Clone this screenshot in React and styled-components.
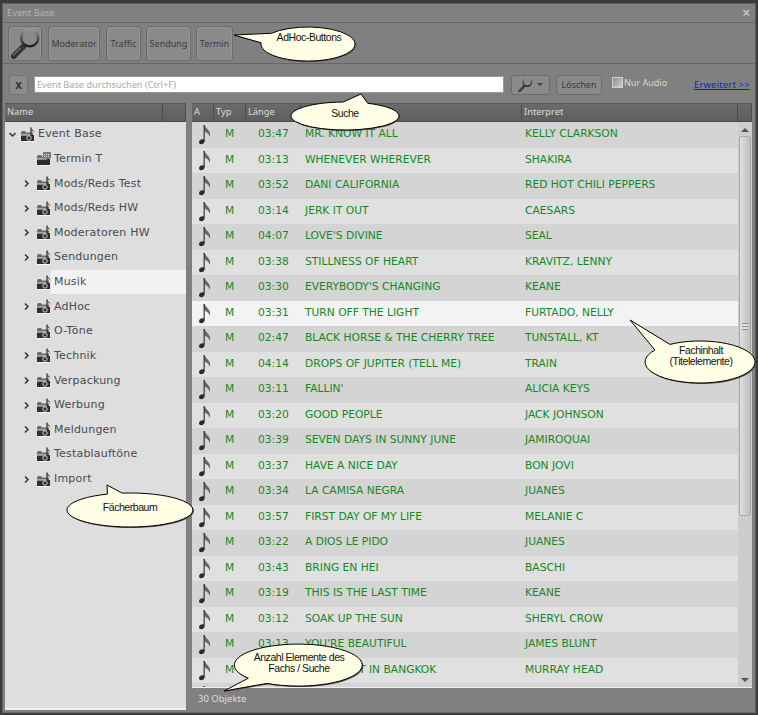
import React from "react";
import styled, { createGlobalStyle } from "styled-components";

const GlobalStyle = createGlobalStyle`
  html, body {
    margin: 0;
    padding: 0;
    background: #3c3c3c;
  }
`;

const CHROME_FONT = `"Noto Sans", sans-serif`;
const COLUMNS = "22px 32px 55px 221px 216px 1fr";

const tracks = [
  ["03:47", "MR. KNOW IT ALL", "KELLY CLARKSON"],
  ["03:13", "WHENEVER WHEREVER", "SHAKIRA"],
  ["03:52", "DANI CALIFORNIA", "RED HOT CHILI PEPPERS"],
  ["03:14", "JERK IT OUT", "CAESARS"],
  ["04:07", "LOVE'S DIVINE", "SEAL"],
  ["03:38", "STILLNESS OF HEART", "KRAVITZ, LENNY"],
  ["03:30", "EVERYBODY'S CHANGING", "KEANE"],
  ["03:31", "TURN OFF THE LIGHT", "FURTADO, NELLY"],
  ["02:47", "BLACK HORSE & THE CHERRY TREE", "TUNSTALL, KT"],
  ["04:14", "DROPS OF JUPITER (TELL ME)", "TRAIN"],
  ["03:11", "FALLIN'", "ALICIA KEYS"],
  ["03:20", "GOOD PEOPLE", "JACK JOHNSON"],
  ["03:39", "SEVEN DAYS IN SUNNY JUNE", "JAMIROQUAI"],
  ["03:37", "HAVE A NICE DAY", "BON JOVI"],
  ["03:34", "LA CAMISA NEGRA", "JUANES"],
  ["03:57", "FIRST DAY OF MY LIFE", "MELANIE C"],
  ["03:22", "A DIOS LE PIDO", "JUANES"],
  ["03:43", "BRING EN HEI", "BASCHI"],
  ["03:19", "THIS IS THE LAST TIME", "KEANE"],
  ["03:12", "SOAK UP THE SUN", "SHERYL CROW"],
  ["03:13", "YOU'RE BEAUTIFUL", "JAMES BLUNT"],
  ["03:46", "ONE NIGHT IN BANGKOK", "MURRAY HEAD"],
  ["", "", ""],
];

const treeItems = [
  { label: "Termin T", calendar: true },
  { label: "Mods/Reds Test", arrow: true },
  { label: "Mods/Reds HW", arrow: true },
  { label: "Moderatoren HW", arrow: true },
  { label: "Sendungen", arrow: true },
  { label: "Musik", selected: true },
  { label: "AdHoc", arrow: true },
  { label: "O-Töne" },
  { label: "Technik", arrow: true },
  { label: "Verpackung", arrow: true },
  { label: "Werbung", arrow: true },
  { label: "Meldungen", arrow: true },
  { label: "Testablauftöne" },
  { label: "Import", arrow: true },
];

const Window = styled.div`
  position: relative;
  width: 758px;
  height: 715px;
  box-sizing: border-box;
  padding: 3px 2px 2px;
  background: #3c3c3c;
  overflow: hidden;
  font-family: "DejaVu Sans", sans-serif;
`;

const Frame = styled.div`
  height: 100%;
  box-sizing: border-box;
  padding: 0 3px 2px 2px;
  display: flex;
  flex-direction: column;
  background: #808080;
  border: 1px solid #5f5f5f;
  border-bottom-color: #6a6a6a;
`;

const TitleBar = styled.div`
  flex: 0 0 18px;
  box-sizing: border-box;
  display: flex;
  align-items: center;
  justify-content: space-between;
  padding: 0 0 2px 2px;
  font-family: ${CHROME_FONT};
  font-size: 9.3px;
  color: #b4b4b4;
`;

const CloseMark = styled.span`
  font-family: "Liberation Sans", sans-serif;
  font-size: 13px;
  font-weight: 700;
  color: #c8c8c8;
  margin-right: 2px;
  line-height: 1;
`;

const Toolbar = styled.div`
  flex: 0 0 42px;
  box-sizing: border-box;
  margin: 0 -3px 0 -2px;
  padding: 3px 3px 0 5px;
  display: flex;
  gap: 5px;
  border-top: 1px solid #666;
  border-bottom: 1px solid #666;
`;

const AdHocButton = styled.button`
  width: ${(p) => p.$width}px;
  height: 35px;
  margin-right: ${(p) => p.$after || 0}px;
  padding: 0;
  display: flex;
  align-items: center;
  justify-content: center;
  font-family: ${CHROME_FONT};
  font-size: 9px;
  color: #3e3e3e;
  background: #8a8a8a;
  border: 1px solid #6c6c6c;
  border-radius: 3px;
  box-shadow: inset 0 0 0 1px #939393;
`;

const SearchRow = styled.div`
  flex: 0 0 39px;
  box-sizing: border-box;
  display: flex;
  align-items: center;
  padding: 2px 0 0 4px;
`;

const ClearButton = styled.button`
  width: 19px;
  height: 20px;
  margin-right: 6px;
  padding: 0;
  font-family: "Liberation Sans", sans-serif;
  font-size: 12px;
  font-weight: 700;
  color: #2f2f2f;
  background: #8c8c8c;
  border: 1px solid #747474;
  border-radius: 2px;
`;

const SearchInput = styled.div`
  width: 470px;
  height: 17px;
  box-sizing: border-box;
  margin-right: 7px;
  padding-left: 2px;
  display: flex;
  align-items: center;
  font-family: ${CHROME_FONT};
  font-size: 9.2px;
  color: #a8a8a8;
  background: #fff;
  border: 1px solid #999;
`;

const DropButton = styled.button`
  width: 39px;
  height: 20px;
  margin-right: 6px;
  padding: 0 6px 0 5px;
  display: flex;
  align-items: center;
  justify-content: space-between;
  background: #8a8a8a;
  border: 1px solid #6c6c6c;
  border-radius: 3px;
`;

const DropArrow = styled.span`
  width: 0;
  height: 0;
  border-left: 3px solid transparent;
  border-right: 3px solid transparent;
  border-top: 3px solid #444;
`;

const ClearTextButton = styled.button`
  width: 46px;
  height: 20px;
  margin-right: 10px;
  padding: 0;
  font-family: ${CHROME_FONT};
  font-size: 9px;
  color: #3a3a3a;
  background: #8a8a8a;
  border: 1px solid #6c6c6c;
  border-radius: 3px;
`;

const AudioBox = styled.span`
  width: 9px;
  height: 9px;
  margin: -4px 1px 0 0;
  background: linear-gradient(135deg, #8f8f8f, #cfcfcf);
  border: 1px solid #d0d0d0;
`;

const AudioLabel = styled.span`
  width: 70px;
  margin-top: -4px;
  font-family: ${CHROME_FONT};
  font-size: 9px;
  color: #d8d8d8;
`;

const MoreLink = styled.a`
  font-family: ${CHROME_FONT};
  font-size: 9.5px;
  letter-spacing: 0.15px;
  color: #1a1ae0;
  text-decoration: underline;
  white-space: nowrap;
`;

const Body = styled.div`
  flex: 1;
  min-height: 0;
  display: flex;
  gap: 6px;
`;

const Side = styled.div`
  flex: 0 0 181px;
  display: flex;
  flex-direction: column;
`;

const Main = styled.div`
  flex: 1;
  min-width: 0;
  display: flex;
  flex-direction: column;
`;

const HeaderBar = styled.div`
  flex: 0 0 19px;
  box-sizing: border-box;
  display: grid;
  grid-template-columns: ${(p) => p.$columns};
  background: linear-gradient(#6a6a6a, #5f5f5f);
  border-top: 1px solid #555;
  border-bottom: 1px solid #4a4a4a;
`;

const HeaderCell = styled.div`
  padding-left: 2px;
  font-family: ${CHROME_FONT};
  font-size: 9.3px;
  line-height: 15px;
  color: #dcdcdc;
  border-right: 1px solid #4d4d4d;
`;

const Tree = styled.div`
  flex: 1;
  background: #dedede;
  border-bottom: 2px solid #f0f0f0;
`;

const TreeRow = styled.div`
  height: 24.64px;
  display: flex;
  align-items: center;
  padding-left: ${(p) => (p.$root ? 3 : 17)}px;
`;

const Chevron = styled.svg`
  flex: 0 0 9px;
  width: 9px;
  height: 9px;
  margin-right: ${(p) => (p.$root ? 4 : 6)}px;
  visibility: ${(p) => (p.$hidden ? "hidden" : "visible")};
`;

const TreeIcon = styled.svg`
  flex: 0 0 14px;
  width: 14px;
  height: 15px;
`;

const TreeLabel = styled.div`
  flex: 1;
  align-self: stretch;
  display: flex;
  align-items: center;
  padding: 0 0 1px 3px;
  font-size: 11px;
  letter-spacing: 0.2px;
  color: #4a4a50;
  background: ${(p) => (p.$selected ? "#f2f2f2" : "transparent")};
`;

const TableArea = styled.div`
  flex: 1;
  min-height: 0;
  display: flex;
`;

const Rows = styled.div`
  flex: 1;
  min-width: 0;
  overflow: hidden;
`;

const Row = styled.div`
  height: 25.53px;
  box-sizing: border-box;
  padding-bottom: 4px;
  display: grid;
  grid-template-columns: 22px 32px 55px 220px 1fr;
  align-items: center;
  font-size: 10.7px;
  color: #14891f;
  background: ${(p) => (p.$selected ? "#f3f3f3" : p.$odd ? "#d4d4d4" : "#e0e0e0")};
`;

const NoteCell = styled.div`
  display: flex;
  justify-content: center;
  margin-top: 2px;
  padding-left: 3px;
`;

const TypeCell = styled.div`
  padding-left: 11px;
`;

const TimeCell = styled.div`
  padding-left: 12px;
`;

const TextCell = styled.div`
  padding-left: 4px;
  white-space: nowrap;
`;

const Scrollbar = styled.div`
  flex: 0 0 14px;
  display: flex;
  flex-direction: column;
  align-items: center;
  background: #cdcdcd;
`;

const ScrollArrow = styled.span`
  flex: 0 0 auto;
  margin: ${(p) => (p.$down ? "auto 0 5px" : "6px 0 4px")};
  width: 0;
  height: 0;
  border-left: 4px solid transparent;
  border-right: 4px solid transparent;
  border-bottom: ${(p) => (p.$down ? 0 : "4px solid #555")};
  border-top: ${(p) => (p.$down ? "4px solid #555" : 0)};
`;

const ScrollThumb = styled.div`
  width: 12px;
  height: 380px;
  box-sizing: border-box;
  display: flex;
  align-items: center;
  justify-content: center;
  background: linear-gradient(90deg, #e0e0e0, #bdbdbd);
  border: 1px solid #a8a8a8;
  border-radius: 2px;
`;

const ScrollGrip = styled.span`
  width: 6px;
  height: 5px;
  border-top: 1px solid #8a8a8a;
  border-bottom: 1px solid #8a8a8a;
  background: linear-gradient(#e0e0e0 40%, #8a8a8a 40%, #8a8a8a 60%, #e0e0e0 60%);
`;

const StatusBar = styled.div`
  flex: 0 0 22px;
  padding-left: 6px;
  font-family: ${CHROME_FONT};
  font-size: 9.5px;
  line-height: 22px;
  color: #dcdcdc;
  background: #808080;
  border-top: 1px solid #f0f0f0;
`;

const Callout = styled.div`
  position: absolute;
  left: ${(p) => p.$x}px;
  top: ${(p) => p.$y}px;
  width: ${(p) => p.$w}px;
  height: ${(p) => p.$h}px;
  pointer-events: none;
`;

const BubbleShape = styled.svg`
  position: absolute;
  inset: 0;
  overflow: visible;
`;

const BubbleText = styled.div`
  position: absolute;
  left: ${(p) => p.$cx}px;
  top: ${(p) => p.$cy}px;
  transform: translate(-50%, -50%);
  text-align: center;
  white-space: nowrap;
  font-family: "Liberation Sans", sans-serif;
  font-size: 10.5px;
  line-height: 11px;
  letter-spacing: -0.45px;
  color: #111;
`;

// ellipse with a pointed tail, a1..a2 is the gap in the outline (degrees, y down)
const bubblePath = ({ cx, cy, rx, ry, tip, a1, a2 }) => {
  const pt = (a) => [
    (cx + rx * Math.cos((a * Math.PI) / 180)).toFixed(1),
    (cy + ry * Math.sin((a * Math.PI) / 180)).toFixed(1),
  ];
  const [x1, y1] = pt(a1);
  const [x2, y2] = pt(a2);
  return `M${x1} ${y1}L${tip[0]} ${tip[1]}L${x2} ${y2}A${rx} ${ry} 0 1 1 ${x1} ${y1}Z`;
};

const callouts = [
  { cx: 308, cy: 44, rx: 47, ry: 17, tip: [234, 35], a1: 184, a2: 219, tx: 309, ty: 37, lines: ["AdHoc-Buttons"] },
  { cx: 345, cy: 116, rx: 54, ry: 14, tip: [361, 94], a1: 268, a2: 295, tx: 345, ty: 113, lines: ["Suche"] },
  { cx: 700, cy: 362, rx: 55, ry: 21, tip: [630, 320], a1: 215, a2: 237, tx: 701, ty: 356, lines: ["Fachinhalt", "(Titelelemente)"] },
  { cx: 130, cy: 510, rx: 63, ry: 17, tip: [107, 485], a1: 249, a2: 263, tx: 130, ty: 507, lines: ["Fächerbaum"] },
  { cx: 298, cy: 665, rx: 64, ry: 21, tip: [224, 691], a1: 119, a2: 141, tx: 299, ty: 663, lines: ["Anzahl Elemente des", "Fachs / Suche"] },
];

const Bubble = ({ data }) => {
  const x = Math.min(data.cx - data.rx, data.tip[0]) - 2;
  const y = Math.min(data.cy - data.ry, data.tip[1]) - 2;
  const w = Math.max(data.cx + data.rx, data.tip[0]) - x + 4;
  const h = Math.max(data.cy + data.ry, data.tip[1]) - y + 4;
  const d = bubblePath(data);
  return (
    <Callout $x={x} $y={y} $w={w} $h={h}>
      <BubbleShape width={w} height={h} viewBox={`${x} ${y} ${w} ${h}`}>
        <path d={d} transform="translate(1 1)" fill="#555" />
        <path d={d} fill="#ffffe6" stroke="#000" strokeWidth="1" />
      </BubbleShape>
      <BubbleText $cx={data.tx - x} $cy={data.ty - y}>
        {data.lines.map((line) => (
          <div key={line}>{line}</div>
        ))}
      </BubbleText>
    </Callout>
  );
};

const Magnifier = ({ size, id, ring, handle }) => (
  <svg width={size} height={size} viewBox="0 0 34 34" overflow="visible">
    <defs>
      <linearGradient id={id} x1="0" y1="0" x2="0" y2="1">
        <stop offset="0" stopColor="#9a9a9a" />
        <stop offset="0.45" stopColor="#5a5a5a" />
        <stop offset="1" stopColor="#1e1e1e" />
      </linearGradient>
    </defs>
    <path d="M5 30L15 20" stroke="#333" strokeWidth={handle} strokeLinecap="round" />
    <path d="M4.5 29L12 21.5" stroke="#6e6e6e" strokeWidth="1.4" strokeLinecap="round" />
    <circle cx="22" cy="10.5" r="9" fill="none" stroke={`url(#${id})`} strokeWidth={ring} />
  </svg>
);

const Note = () => (
  <svg width="12" height="21" viewBox="0 0 12 21">
    <path d="M4.6 1h1.1c.5 3 4.4 4.6 5.2 8 .3 1.4.1 2.8-.6 4 .1-3-2.3-4.7-4.6-5.3z" fill="#666" />
    <path
      d="M4.6 1h1.1v16c0 1.9-1.7 3.2-3.4 3.2C.9 20.2 0 19.4 0 18.2c0-1.7 1.9-3 3.5-3 .4 0 .8 0 1.1.2z"
      fill="#2b2b2b"
    />
  </svg>
);

const FolderIcon = ({ calendar }) => (
  <TreeIcon viewBox="0 0 14 15">
    <path d="M0 5.5l1-1.5h3l1 1.5h7v3H0z" fill="#6a6a6a" />
    <path d="M0 8h13v6H0z" fill="#2e2e2e" />
    <path d="M0 7.5h10v1H0z" fill="#e6e6e6" />
    <path d="M0 14h13.5v1H0z" fill="#f7f7f7" />
    {calendar ? (
      <>
        <path d="M6 1h8v6.5H6z" fill="#7a7a7a" />
        <path d="M7 3h1v1H7zM9 3h1v1H9zM11 3h1v1h-1zM7 5h1v1H7zM9 5h1v1H9zM11 5h1v1h-1z" fill="#e6e6e6" />
      </>
    ) : (
      <>
        <path d="M10 .5v10" stroke="#2a2a2a" strokeWidth="1.2" />
        <path d="M10 .5c.5 2 3 2.5 3.5 5-1-1.2-2.4-1.8-3.5-2z" fill="#555" />
        <circle cx="8" cy="11" r="2.2" fill="#2e2e2e" stroke="#e6e6e6" strokeWidth="0.9" />
      </>
    )}
  </TreeIcon>
);

const Arrow = ({ open, hidden, root }) => (
  <Chevron viewBox="0 0 9 9" $hidden={hidden} $root={root}>
    <path
      d={open ? "M1.5 3l3 3 3-3" : "M3 1.5l3 3-3 3"}
      fill="none"
      stroke="#333"
      strokeWidth="1.5"
    />
  </Chevron>
);

export default function App() {
  return (
    <Window>
      <GlobalStyle />
      <Frame>
        <TitleBar>
          Event Base
          <CloseMark>×</CloseMark>
        </TitleBar>
        <Toolbar>
          <AdHocButton $width={34} $after={1}>
            <Magnifier size={32} id="lens-big" ring={2.6} handle={6} />
          </AdHocButton>
          <AdHocButton $width={52} $after={1}>Moderator</AdHocButton>
          <AdHocButton $width={35}>Traffic</AdHocButton>
          <AdHocButton $width={45}>Sendung</AdHocButton>
          <AdHocButton $width={37}>Termin</AdHocButton>
        </Toolbar>
        <SearchRow>
          <ClearButton>x</ClearButton>
          <SearchInput>Event Base durchsuchen (Ctrl+F)</SearchInput>
          <DropButton>
            <Magnifier size={16} id="lens-small" ring={3} handle={5} />
            <DropArrow />
          </DropButton>
          <ClearTextButton>Löschen</ClearTextButton>
          <AudioBox />
          <AudioLabel>Nur Audio</AudioLabel>
          <MoreLink>Erweitert &gt;&gt;</MoreLink>
        </SearchRow>
        <Body>
          <Side>
            <HeaderBar $columns="158px 1fr">
              <HeaderCell>Name</HeaderCell>
              <HeaderCell />
            </HeaderBar>
            <Tree>
              <TreeRow $root>
                <Arrow open root />
                <FolderIcon />
                <TreeLabel>Event Base</TreeLabel>
              </TreeRow>
              {treeItems.map((item) => (
                <TreeRow key={item.label}>
                  <Arrow hidden={!item.arrow} />
                  <FolderIcon calendar={item.calendar} />
                  <TreeLabel $selected={item.selected}>{item.label}</TreeLabel>
                </TreeRow>
              ))}
            </Tree>
          </Side>
          <Main>
            <HeaderBar $columns={COLUMNS}>
              <HeaderCell>A</HeaderCell>
              <HeaderCell>Typ</HeaderCell>
              <HeaderCell>Länge</HeaderCell>
              <HeaderCell />
              <HeaderCell>Interpret</HeaderCell>
              <HeaderCell />
            </HeaderBar>
            <TableArea>
              <Rows>
                {tracks.map(([time, title, artist], i) => (
                  <Row key={i} $odd={i % 2 === 0} $selected={i === 7}>
                    <NoteCell>
                      <Note />
                    </NoteCell>
                    <TypeCell>{title ? "M" : ""}</TypeCell>
                    <TimeCell>{time}</TimeCell>
                    <TextCell>{title}</TextCell>
                    <TextCell>{artist}</TextCell>
                  </Row>
                ))}
              </Rows>
              <Scrollbar>
                <ScrollArrow />
                <ScrollThumb>
                  <ScrollGrip />
                </ScrollThumb>
                <ScrollArrow $down />
              </Scrollbar>
            </TableArea>
            <StatusBar>30 Objekte</StatusBar>
          </Main>
        </Body>
      </Frame>
      {callouts.map((c) => (
        <Bubble key={c.lines[0]} data={c} />
      ))}
    </Window>
  );
}
